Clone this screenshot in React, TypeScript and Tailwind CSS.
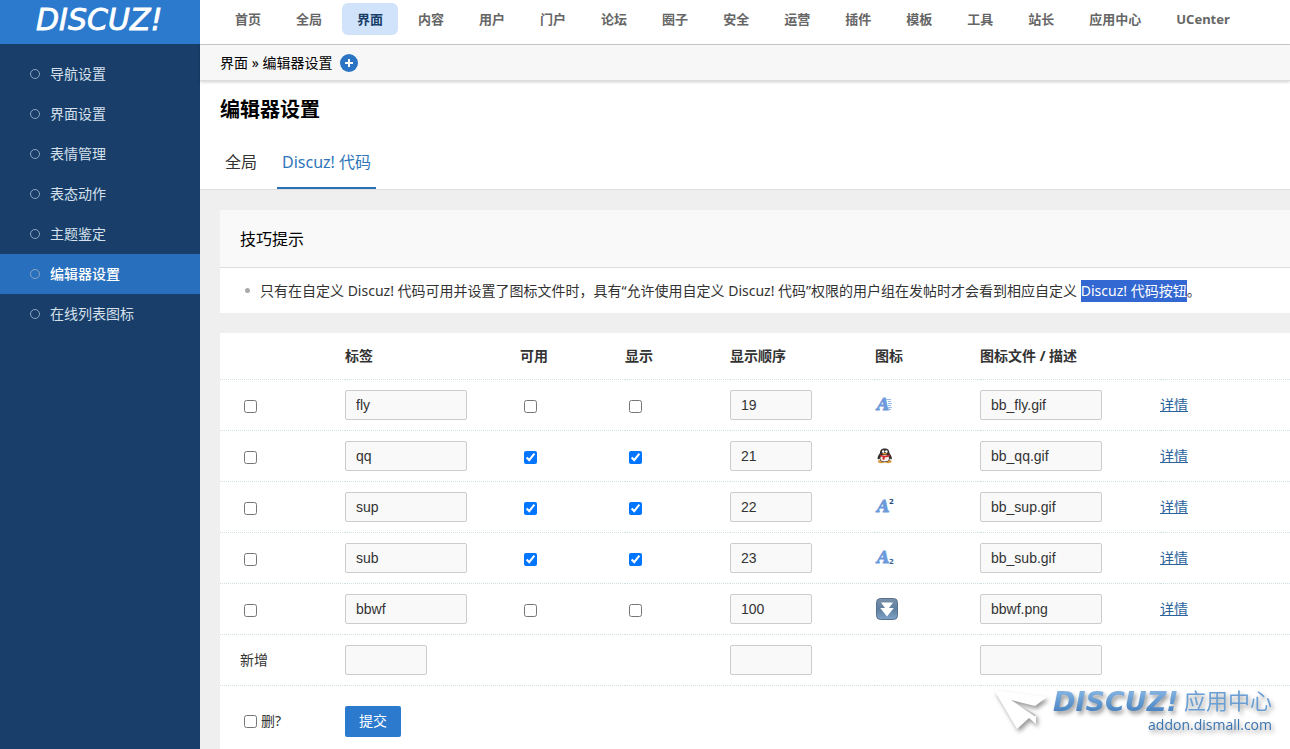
import React, { useState } from 'react';

const fontStack = "font-['Noto_Sans','Noto_Sans_CJK_SC',sans-serif]";

const topNav = [
  '首页', '全局', '界面', '内容', '用户', '门户', '论坛', '圈子', '安全',
  '运营', '插件', '模板', '工具', '站长', '应用中心', 'UCenter',
];

const sideNav = ['导航设置', '界面设置', '表情管理', '表态动作', '主题鉴定', '编辑器设置', '在线列表图标'];

type IconName = 'fly' | 'qq' | 'sup' | 'sub' | 'bbwf';

interface CodeRow {
  tag: IconName;
  available: boolean;
  visible: boolean;
  order: string;
  file: string;
}

const initialRows: CodeRow[] = [
  { tag: 'fly', available: false, visible: false, order: '19', file: 'bb_fly.gif' },
  { tag: 'qq', available: true, visible: true, order: '21', file: 'bb_qq.gif' },
  { tag: 'sup', available: true, visible: true, order: '22', file: 'bb_sup.gif' },
  { tag: 'sub', available: true, visible: true, order: '23', file: 'bb_sub.gif' },
  { tag: 'bbwf', available: false, visible: false, order: '100', file: 'bbwf.png' },
];

const CodeIcon = ({ name }: { name: IconName }) => {
  if (name === 'bbwf') {
    return (
      <svg className="w-6 h-6" viewBox="0 0 24 24">
        <defs>
          <linearGradient id="downBg" x1="0" y1="0" x2="0" y2="1">
            <stop offset="0" stopColor="#7b92ab" />
            <stop offset="0.5" stopColor="#5f7f9f" />
            <stop offset="1" stopColor="#7fa3c8" />
          </linearGradient>
        </defs>
        <rect x="1.5" y="1.5" width="21" height="21" rx="4" fill="url(#downBg)" stroke="#56718d" />
        <path d="M6 5.500h12l-4 5.500h4.800L12 19.500 5.200 11H10z" fill="#fff" />
      </svg>
    );
  }
  if (name === 'qq') {
    return (
      <svg className="w-5 h-5" viewBox="0 0 20 20">
        <ellipse cx="6.500" cy="15.500" rx="3.500" ry="1.700" fill="#d99a3c" />
        <ellipse cx="13" cy="15.500" rx="3.500" ry="1.700" fill="#d99a3c" />
        <path d="M9.700 2.500C6.200 2.500 5 4.500 5 7c-1.500 1.800-2.700 4-2.400 6.200.8.500 1.300-.2 1.800-.8.6 2.500 2.700 3.600 5.300 3.600s4.700-1.100 5.300-3.600c.5.600 1 1.300 1.800.8.300-2.200-.9-4.400-2.400-6.200 0-2.500-1.200-4.500-4.700-4.500z" fill="#35302f" />
        <ellipse cx="9.700" cy="12.300" rx="4.300" ry="3.300" fill="#f6efec" />
        <ellipse cx="8.200" cy="5.600" rx="1.200" ry="1.400" fill="#fff" />
        <ellipse cx="11.400" cy="5.600" rx="1.200" ry="1.400" fill="#fff" />
        <ellipse cx="9.700" cy="7.800" rx="2.600" ry=".8" fill="#e8a23a" />
        <path d="M4.800 8.500c3.200 1.600 6.600 1.600 9.800 0l.3 1.500c-1.500 1-3.200 1.300-5 1.300l-.5 2.500-2-.3.300-2.500-2.700-.8z" fill="#d0282a" />
      </svg>
    );
  }
  return (
    <svg className="w-5 h-5" viewBox="0 0 20 20">
      <text x="2" y="15" fontFamily="DejaVu Serif" fontSize="16" fontWeight="bold" fontStyle="italic" fill="#6c9adb" stroke="#6c9adb" strokeWidth="0.8">
        A
      </text>
      {name === 'fly' && (
        <path d="M11 4.500h5M13 6.500h3M13 8.500h4M13 10.500h3M13 12.500h4M13 14.500h3" stroke="#9dbbe8" strokeWidth="1" />
      )}
      {name === 'sup' && (
        <text x="14" y="7" fontFamily="DejaVu Sans" fontSize="7" fontWeight="bold" fill="#274a80">2</text>
      )}
      {name === 'sub' && (
        <text x="14" y="16" fontFamily="DejaVu Sans" fontSize="7" fontWeight="bold" fill="#3c64a0">2</text>
      )}
    </svg>
  );
};

const Check = ({ label, defaultChecked }: { label: string; defaultChecked?: boolean }) => (
  <input
    type="checkbox"
    aria-label={label}
    defaultChecked={defaultChecked}
    className="block ml-1 mt-1 w-[13px] h-[13px]"
  />
);

const TextBox = ({ label, value, className }: { label: string; value?: string; className: string }) => (
  <input
    type="text"
    aria-label={label}
    defaultValue={value}
    className={`block h-[30px] px-2.5 border border-[#ccc] rounded-xs bg-[#f9f9f9] text-sm text-[#333] font-['Liberation_Sans',sans-serif] ${className}`}
  />
);

const Sidebar = () => (
  <aside className="w-[200px] shrink-0 bg-[#183e69]">
    <div className="h-11 bg-[#2b7acd] flex items-center justify-center">
      <a href="#" aria-label="DISCUZ!">
        <svg className="w-[132px] h-11" viewBox="0 0 132 44">
          <text x="2" y="30" fontFamily="DejaVu Sans" fontSize="30" fontStyle="italic" fill="#fff" stroke="#fff" strokeWidth="0.8">
            DISCUZ!
          </text>
        </svg>
      </a>
    </div>
    <nav className="pt-2.5">
      {sideNav.map((item) => (
        <a
          key={item}
          href="#"
          className={`flex items-center gap-2.5 h-10 pl-[30px] text-sm ${
            item === '编辑器设置' ? 'bg-[#286fbd] text-white font-medium' : 'text-[#d5e0ec]'
          }`}
        >
          <span className="w-2.5 h-2.5 rounded-full border border-[#8aa5c2]" />
          {item}
        </a>
      ))}
    </nav>
  </aside>
);

const TopBar = () => (
  <header className="h-[45px] border-b border-[#ccc] bg-white">
    <nav className="flex gap-[5px] pl-5 pt-[3px]">
      {topNav.map((item) => (
        <a
          key={item}
          href="#"
          className={`h-8 px-[15px] rounded-md text-[13px] leading-8 font-bold whitespace-nowrap ${
            item === '界面' ? 'bg-[#d0e3fa] text-[#183e69]' : 'text-[#666]'
          }`}
        >
          {item}
        </a>
      ))}
    </nav>
  </header>
);

const Tips = () => (
  <section className="bg-white">
    <h2 className="h-[58px] px-5 bg-[#f9f9f9] border-b border-[#ddd] text-base leading-[58px] text-black">技巧提示</h2>
    <ul className="px-5 pt-3 pb-[11px]">
      <li className="flex text-sm leading-[22px] text-[#333] whitespace-nowrap">
        <span className="w-[5px] h-[5px] ml-[5px] mr-2.5 mt-2 rounded-full bg-[#aaa]" />
        <p>
          只有在自定义 Discuz! 代码可用并设置了图标文件时，具有“允许使用自定义 Discuz! 代码”权限的用户组在发帖时才会看到相应自定义{' '}
          <mark className="inline-block bg-[#3367d1] text-white">Discuz! 代码按钮</mark>。
        </p>
      </li>
    </ul>
  </section>
);

const CodeTable = () => (
  <table className="w-full table-fixed bg-white text-sm text-[#333]">
    <colgroup>
      <col className="w-[125px]" />
      <col className="w-[175px]" />
      <col className="w-[105px]" />
      <col className="w-[105px]" />
      <col className="w-[145px]" />
      <col className="w-[105px]" />
      <col className="w-[180px]" />
      <col />
    </colgroup>
    <thead>
      <tr className="h-[46px] border-b border-dotted border-[#cfdfe4] text-left">
        <th />
        <th>标签</th>
        <th>可用</th>
        <th>显示</th>
        <th>显示顺序</th>
        <th>图标</th>
        <th>图标文件 / 描述</th>
        <th />
      </tr>
    </thead>
    <tbody>
      {initialRows.map((row) => (
        <tr key={row.tag} className="h-[51px] border-b border-dotted border-[#cfdfe4]">
          <td className="pl-5"><Check label={`删除 ${row.tag}`} /></td>
          <td><TextBox label="标签" value={row.tag} className="w-[122px]" /></td>
          <td><Check label="可用" defaultChecked={row.available} /></td>
          <td><Check label="显示" defaultChecked={row.visible} /></td>
          <td><TextBox label="显示顺序" value={row.order} className="w-[82px]" /></td>
          <td><CodeIcon name={row.tag} /></td>
          <td><TextBox label="图标文件" value={row.file} className="w-[122px]" /></td>
          <td><a href="#" className="text-[#2a629b] underline">详情</a></td>
        </tr>
      ))}
      <tr className="h-[51px] border-b border-dotted border-[#cfdfe4]">
        <td className="pl-5">新增</td>
        <td><TextBox label="新标签" className="w-[82px]" /></td>
        <td />
        <td />
        <td><TextBox label="新显示顺序" className="w-[82px]" /></td>
        <td />
        <td><TextBox label="新图标文件" className="w-[122px]" /></td>
        <td />
      </tr>
      <tr className="h-[72px]">
        <td className="pl-5">
          <label className="flex items-center gap-1">
            <input type="checkbox" className="ml-1 w-[13px] h-[13px]" />
            删?
          </label>
        </td>
        <td colSpan={7}>
          <button type="submit" className="block h-[31px] px-3.5 rounded-xs bg-[#2b7acd] text-white">提交</button>
        </td>
      </tr>
    </tbody>
  </table>
);

// Floating link to the add-on store, pinned to the lower right corner
const AddonBadge = () => (
  <a href="#" className="fixed right-[18px] bottom-4 flex items-start drop-shadow-[2px_3px_2px_rgba(0,0,0,0.4)]">
    <svg className="w-[54px] h-11 mr-1" viewBox="0 0 54 44">
      <path d="M0 1l53 7-12 9-24-6 25 15v9l-7-6-12 11z" fill="#fff" />
      <path d="M17 11l25 15-1 1.500z" fill="#bbb" />
    </svg>
    <span className="flex flex-col items-end">
      <span className="flex items-start">
        <svg className="w-[132px] h-7" viewBox="0 0 132 28">
          <defs>
            <linearGradient id="wordmark" x1="0" y1="0" x2="0" y2="1">
              <stop offset="0.2" stopColor="#7fb0e0" />
              <stop offset="1" stopColor="#3a77b8" />
            </linearGradient>
          </defs>
          <text x="1" y="22" fontFamily="DejaVu Sans" fontSize="27" fontWeight="bold" fontStyle="italic" fill="url(#wordmark)">
            DISCUZ!
          </text>
        </svg>
        <span className="text-[22px] leading-[22px] whitespace-nowrap text-[#6a9fd4]">应用中心</span>
      </span>
      <span className="font-['Open_Sans',sans-serif] text-sm leading-4 text-[#3a74b0]">addon.dismall.com</span>
    </span>
  </a>
);

export default function App() {
  const [tab, setTab] = useState('Discuz! 代码');

  return (
    <div className={`flex min-h-screen overflow-hidden bg-white ${fontStack}`}>
      <Sidebar />
      <div className="flex-1 min-w-0 bg-[#efefef]">
        <TopBar />
        <div className="relative flex items-center h-9 pl-5 bg-[#f7f7f7] border-b border-[#ddd] shadow-[0_1px_3px_rgba(0,0,0,0.2)] text-sm text-black">
          界面 » 编辑器设置
          <button aria-label="添加" className="ml-2 w-[18px] h-[18px] rounded-full bg-[#2b74c4] flex items-center justify-center">
            <svg className="w-2 h-2" viewBox="0 0 8 8">
              <path d="M4 0v8M0 4h8" stroke="#fff" strokeWidth="2" />
            </svg>
          </button>
        </div>

        <div className="bg-white border-b border-[#ddd] pl-5 pt-[13px]">
          <h1 className="text-xl leading-8 font-bold text-black">编辑器设置</h1>
          <div className="flex gap-[15px] mt-[11px]">
            {['全局', 'Discuz! 代码'].map((item) => (
              <button
                key={item}
                onClick={() => setTab(item)}
                className={`h-[52px] px-[5px] border-b-2 text-base ${
                  tab === item ? 'border-[#2b6fb5] text-[#2f75b9]' : 'border-transparent text-[#333]'
                }`}
              >
                {item}
              </button>
            ))}
          </div>
        </div>

        <main className="pl-5 pt-5 flex flex-col gap-5">
          <Tips />
          <CodeTable />
        </main>
      </div>
      <AddonBadge />
    </div>
  );
}
